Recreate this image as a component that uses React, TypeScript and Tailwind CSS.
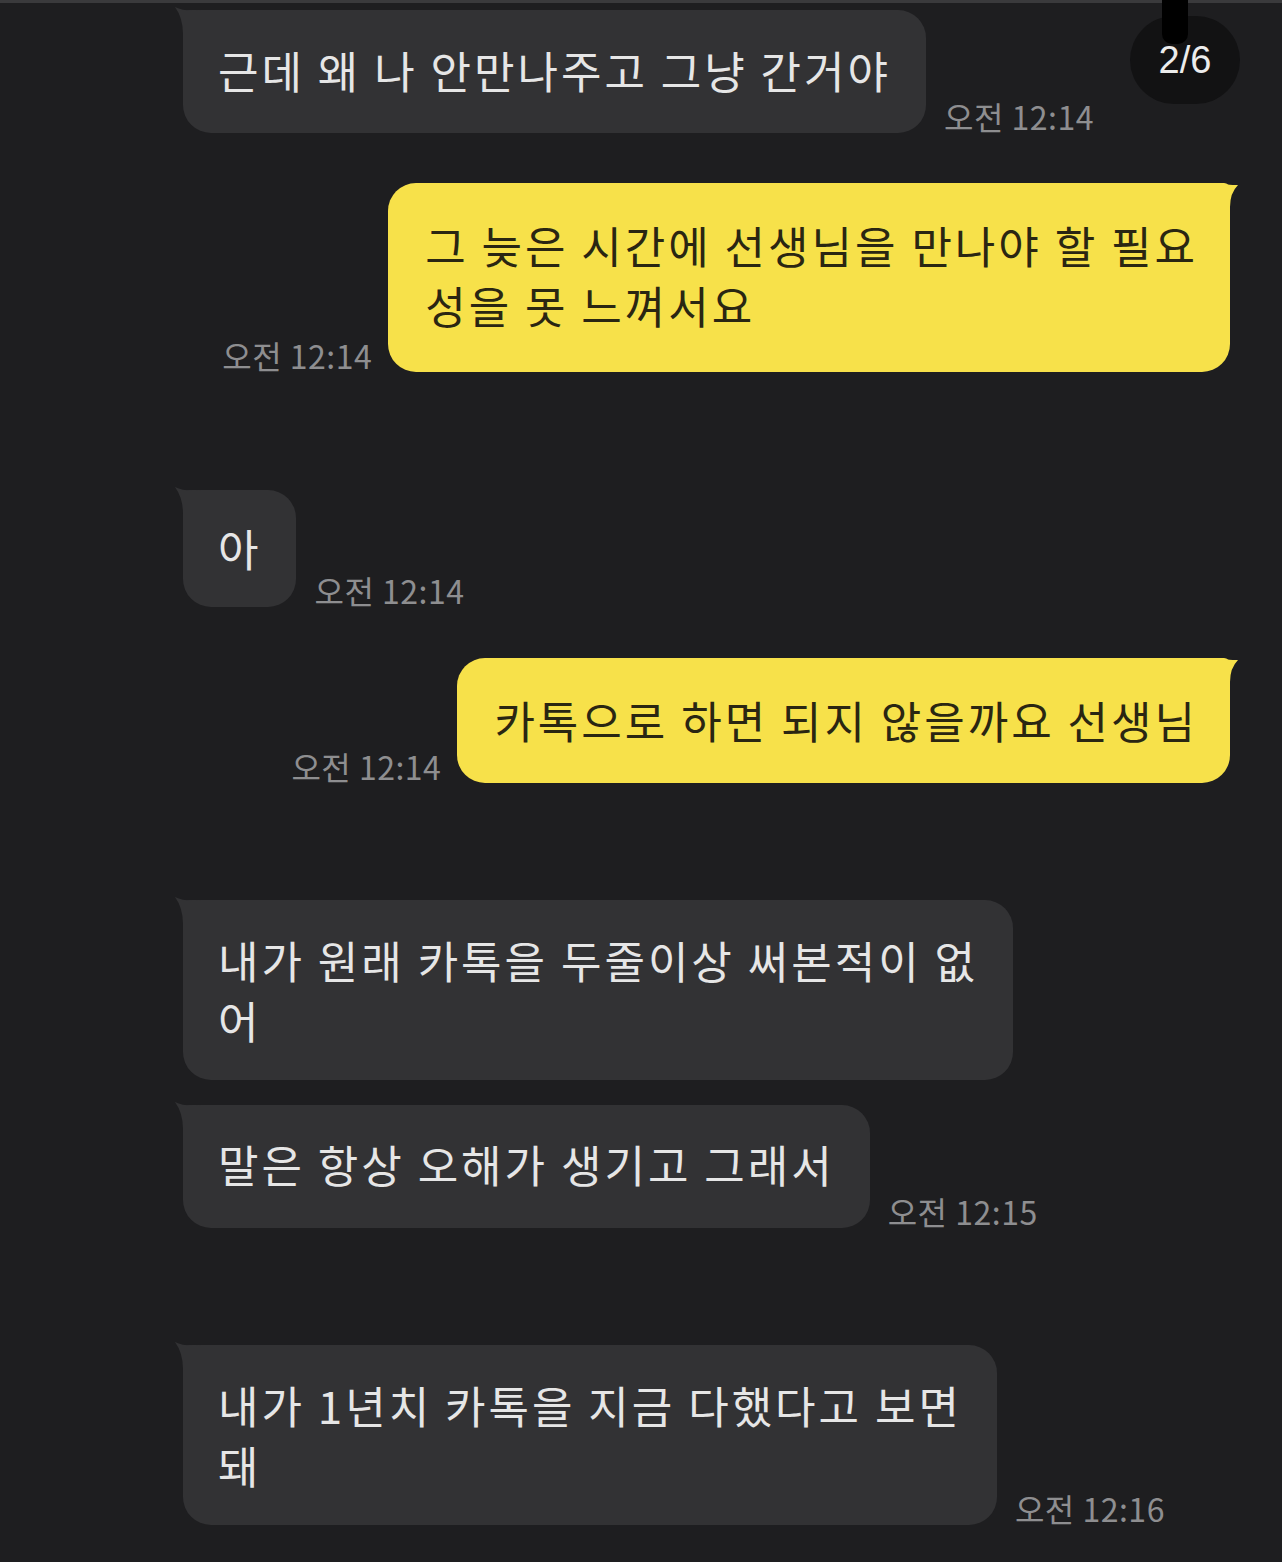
const font = { fontFamily: '"Noto Sans CJK KR", "Noto Sans", sans-serif' };

function GrayTail() {
  return (
    <svg className="absolute -left-[10px] -top-[4px]" width="30" height="30" viewBox="0 0 30 30">
      <path d="M2 1 Q12 6 28 4 L28 28 L10 28 Q10 12 2 1 Z" fill="#323234" />
    </svg>
  );
}

function YellowTail() {
  return (
    <svg className="absolute -right-[10px] -top-[4px]" width="30" height="30" viewBox="0 0 30 30">
      <path d="M28 6 Q18 6 2 4 L2 28 L20 28 Q20 14 28 6 Z" fill="#f7e14a" />
    </svg>
  );
}

function Time({ t }: { t: string }) {
  return (
    <span className="text-[32px] leading-none tracking-[0.5px] text-[#8e8e90] mb-[1px] whitespace-nowrap">{t}</span>
  );
}

type Msg = { lines: string[]; time?: string; className?: string; pad?: string };

function Left({ lines, time, className = "", pad = "py-[31px]" }: Msg) {
  return (
    <div className={`flex items-end pl-[183px] ${className}`}>
      <div className={`relative bg-[#323234] rounded-[28px] rounded-tl-[6px] px-[35px] ${pad} text-[44px] leading-[60px] tracking-[3px] text-[#e6e6e6] whitespace-nowrap`}>
        <GrayTail />
        {lines.map((l) => (
          <div key={l}>{l}</div>
        ))}
      </div>
      {time && <div className="ml-[18px] flex"><Time t={time} /></div>}
    </div>
  );
}

function Right({ lines, time, className = "", pad = "py-[32px]" }: Msg) {
  return (
    <div className={`flex items-end justify-end pr-[52px] ${className}`}>
      <div className="mr-[16px] flex"><Time t={time ?? ""} /></div>
      <div className={`relative bg-[#f7e14a] rounded-[28px] rounded-tr-[6px] pl-[37px] pr-[32px] ${pad} text-[44px] leading-[60px] tracking-[3px] text-[#2a2612] whitespace-nowrap`}>
        <YellowTail />
        {lines.map((l) => (
          <div key={l}>{l}</div>
        ))}
      </div>
    </div>
  );
}

export default function App() {
  return (
    <div className="relative w-[1282px] h-[1562px] bg-[#1e1e20] overflow-hidden" style={font}>
      <div className="h-[3px] bg-[#3a3a3c]" />
      <div className="pt-[7px]">
        <Left lines={["근데 왜 나 안만나주고 그냥 간거야"]} time="오전 12:14" pad="pt-[30px] pb-[33px]" />
        <Right className="mt-[50px]" lines={["그 늦은 시간에 선생님을 만나야 할 필요", "성을 못 느껴서요"]} time="오전 12:14" pad="pt-[32px] pb-[37px]" />
        <Left className="mt-[118px]" lines={["아"]} time="오전 12:14" pad="pt-[28px] pb-[29px]" />
        <Right className="mt-[51px]" lines={["카톡으로 하면 되지 않을까요 선생님"]} time="오전 12:14" pad="pt-[32px] pb-[33px]" />
        <Left className="mt-[117px]" lines={["내가 원래 카톡을 두줄이상 써본적이 없", "어"]} pad="py-[30px]" />
        <Left className="mt-[25px]" lines={["말은 항상 오해가 생기고 그래서"]} time="오전 12:15" pad="pt-[29px] pb-[34px]" />
        <Left className="mt-[117px]" lines={["내가 1년치 카톡을 지금 다했다고 보면", "돼"]} time="오전 12:16" pad="pt-[30px] pb-[30px]" />
      </div>

      {/* page counter badge */}
      <div className="absolute left-[1130px] top-[16px] w-[110px] h-[88px] rounded-full bg-[#121213] flex items-center justify-center">
        <span className="text-[38px] text-[#ececec] leading-none" style={{ fontFamily: '"Liberation Sans", sans-serif' }}>2/6</span>
      </div>
      <div className="absolute left-[1162px] top-0 w-[26px] h-[44px] bg-black rounded-b-[10px]" />
    </div>
  );
}
